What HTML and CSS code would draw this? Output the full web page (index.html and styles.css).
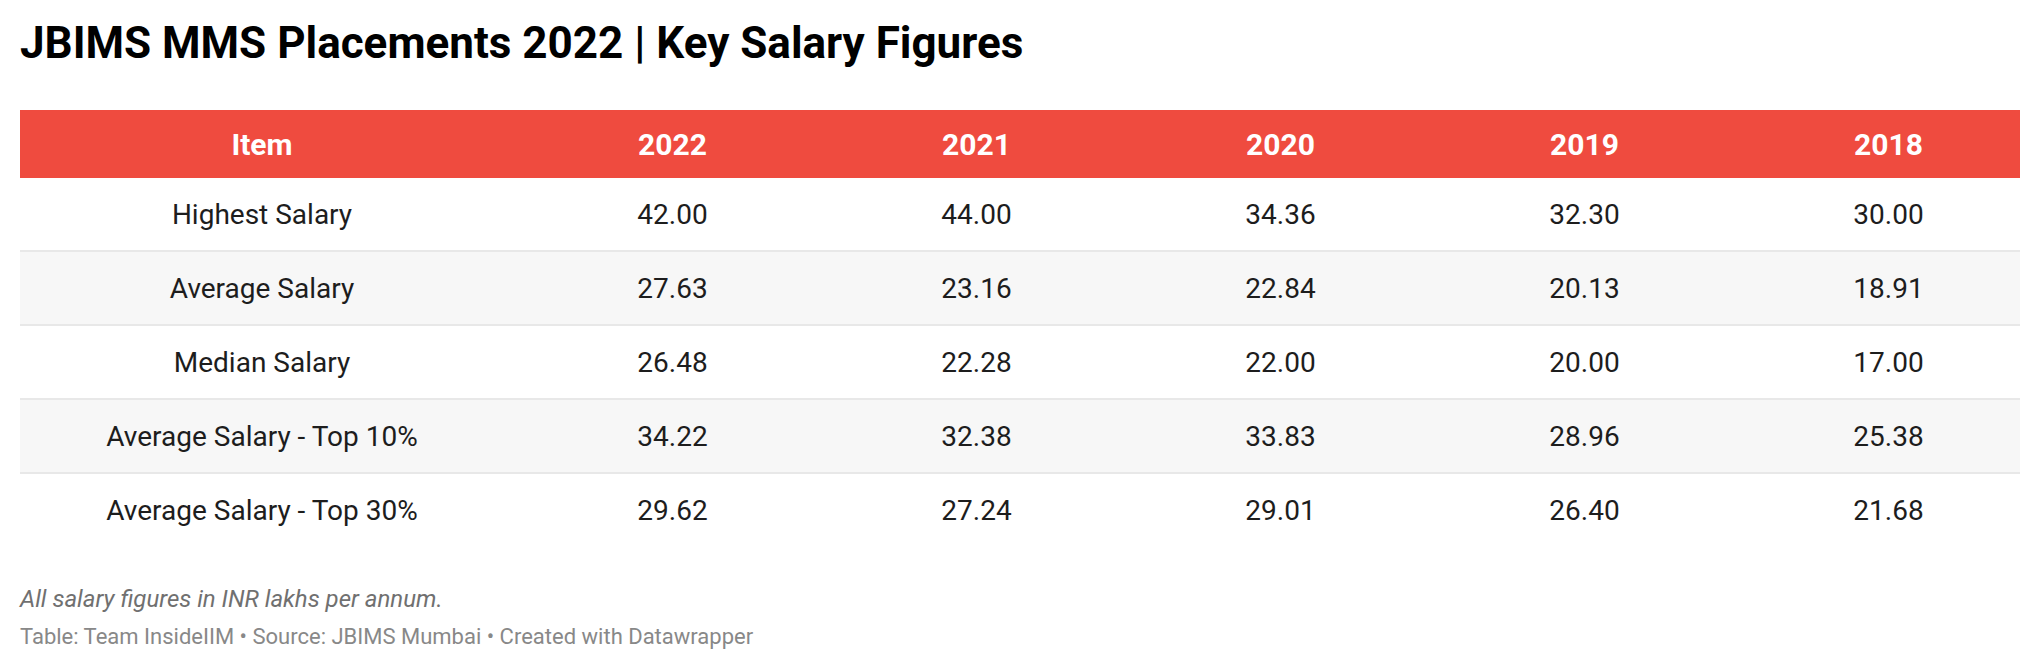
FILE: index.html
```html
<!DOCTYPE html>
<html lang="en">
<head>
<meta charset="utf-8">
<title>JBIMS MMS Placements 2022 | Key Salary Figures</title>
<link rel="stylesheet" href="styles.css">
</head>
<body>
<div class="page">
  <h1 class="title">JBIMS MMS Placements 2022 | Key Salary Figures</h1>
  <div class="table">
    <div class="row head">
      <div class="cell item">Item</div>
      <div class="cell num">2022</div>
      <div class="cell num">2021</div>
      <div class="cell num">2020</div>
      <div class="cell num">2019</div>
      <div class="cell num">2018</div>
    </div>
    <div class="row">
      <div class="cell item">Highest Salary</div>
      <div class="cell num">42.00</div>
      <div class="cell num">44.00</div>
      <div class="cell num">34.36</div>
      <div class="cell num">32.30</div>
      <div class="cell num">30.00</div>
    </div>
    <div class="row alt">
      <div class="cell item">Average Salary</div>
      <div class="cell num">27.63</div>
      <div class="cell num">23.16</div>
      <div class="cell num">22.84</div>
      <div class="cell num">20.13</div>
      <div class="cell num">18.91</div>
    </div>
    <div class="row">
      <div class="cell item">Median Salary</div>
      <div class="cell num">26.48</div>
      <div class="cell num">22.28</div>
      <div class="cell num">22.00</div>
      <div class="cell num">20.00</div>
      <div class="cell num">17.00</div>
    </div>
    <div class="row alt">
      <div class="cell item">Average Salary - Top 10%</div>
      <div class="cell num">34.22</div>
      <div class="cell num">32.38</div>
      <div class="cell num">33.83</div>
      <div class="cell num">28.96</div>
      <div class="cell num">25.38</div>
    </div>
    <div class="row last">
      <div class="cell item">Average Salary - Top 30%</div>
      <div class="cell num">29.62</div>
      <div class="cell num">27.24</div>
      <div class="cell num">29.01</div>
      <div class="cell num">26.40</div>
      <div class="cell num">21.68</div>
    </div>
  </div>
  <p class="notes">All salary figures in INR lakhs per annum.</p>
  <p class="source">Table: Team InsideIIM • Source: JBIMS Mumbai • Created with Datawrapper</p>
</div>
</body>
</html>
```

FILE: styles.css
```css
html, body {
  margin: 0;
  padding: 0;
  background: #ffffff;
}

body {
  font-family: Roboto, "Liberation Sans", Arial, sans-serif;
  color: #1d1d1d;
}

.page {
  padding: 17px 20px 0 20px;
}

.title {
  margin: 0;
  font-size: 44px;
  line-height: 53px;
  font-weight: 700;
  color: #000000;
}

.table {
  margin-top: 40px;
  width: 2000px;
}

.row {
  display: grid;
  grid-template-columns: 480px repeat(5, 304px);
  height: 72px;
  border-bottom: 2px solid #e8e8e8;
  font-size: 28px;
  align-items: center;
}

.row.alt {
  background: #f7f7f7;
}

.row.last {
  border-bottom: none;
}

.row.head {
  height: 68px;
  border-bottom: none;
  background: #ef4b3f;
  color: #ffffff;
  font-size: 30px;
  font-weight: 700;
}

.cell {
  text-align: center;
  white-space: nowrap;
}

.cell.item {
  padding-left: 4px;
}

.cell.num {
  padding-left: 41px;
}

.notes {
  margin: 38px 0 0 0;
  font-size: 24px;
  line-height: 30px;
  font-style: italic;
  color: #707070;
}

.source {
  margin: 8px 0 0 0;
  font-size: 22px;
  line-height: 30px;
  color: #888888;
}
```
